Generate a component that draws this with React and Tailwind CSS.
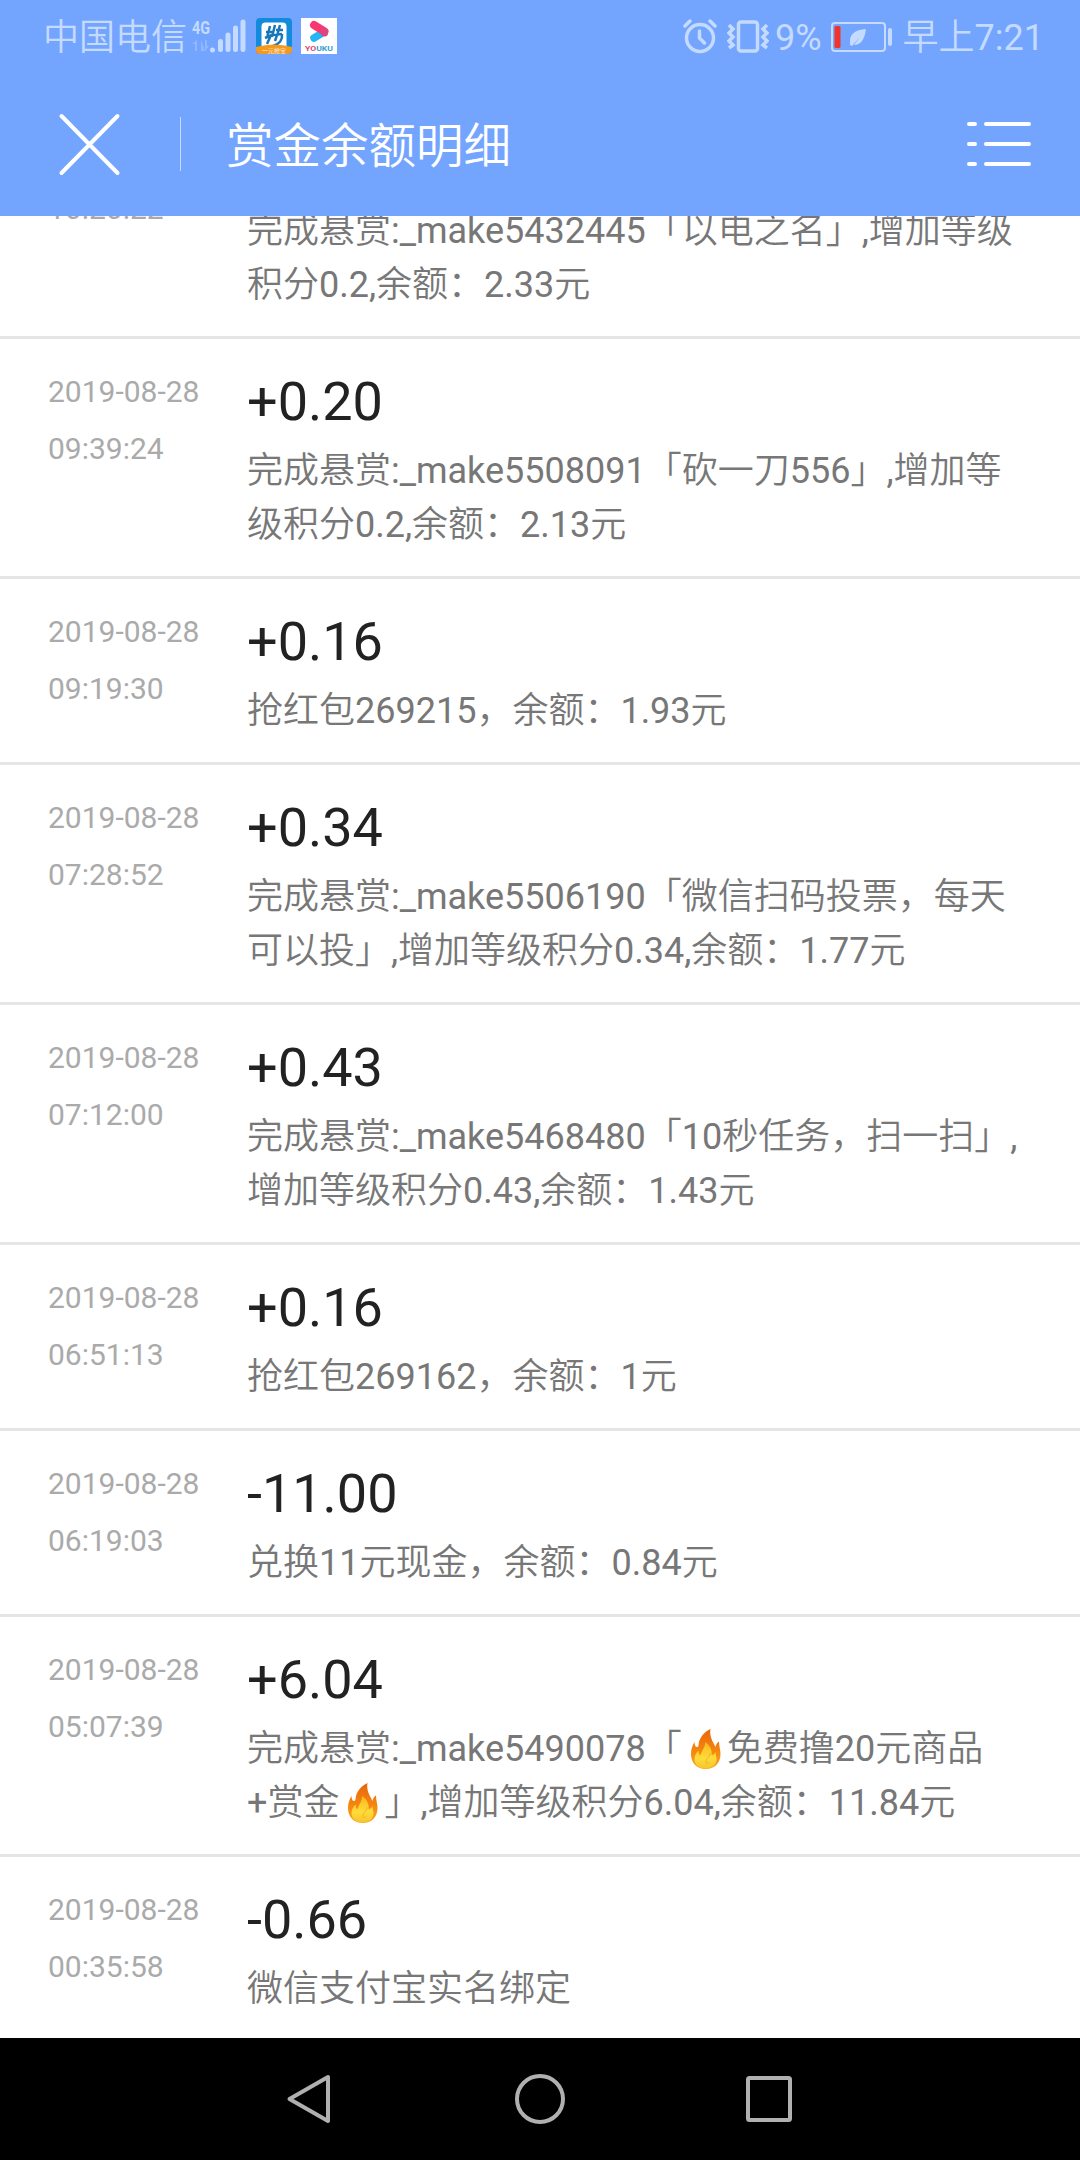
import React from 'react';

// the first entry is scrolled under the header, only its tail is on screen
const records = [
    { date: '', time: '10:20:22', amount: '', lines: ['完成悬赏:_make5432445「以电之名」,增加等级', '积分0.2,余额：2.33元'] },
    { date: '2019-08-28', time: '09:39:24', amount: '+0.20', lines: ['完成悬赏:_make5508091「砍一刀556」,增加等', '级积分0.2,余额：2.13元'] },
    { date: '2019-08-28', time: '09:19:30', amount: '+0.16', lines: ['抢红包269215，余额：1.93元'] },
    { date: '2019-08-28', time: '07:28:52', amount: '+0.34', lines: ['完成悬赏:_make5506190「微信扫码投票，每天', '可以投」,增加等级积分0.34,余额：1.77元'] },
    { date: '2019-08-28', time: '07:12:00', amount: '+0.43', lines: ['完成悬赏:_make5468480「10秒任务，扫一扫」,', '增加等级积分0.43,余额：1.43元'] },
    { date: '2019-08-28', time: '06:51:13', amount: '+0.16', lines: ['抢红包269162，余额：1元'] },
    { date: '2019-08-28', time: '06:19:03', amount: '-11.00', lines: ['兑换11元现金，余额：0.84元'] },
    { date: '2019-08-28', time: '05:07:39', amount: '+6.04', lines: ['完成悬赏:_make5490078「🔥免费撸20元商品', '+赏金🔥」,增加等级积分6.04,余额：11.84元'] },
    { date: '2019-08-28', time: '00:35:58', amount: '-0.66', lines: ['微信支付宝实名绑定'] },
];

function Flame() {
    return (
        <svg viewBox="0 0 45 44" className="inline-block h-11 w-[45px] align-[-10px]">
            <defs>
                <linearGradient id="flameOuter" x1="0" y1="0" x2="0" y2="1">
                    <stop offset="0" stopColor="#e8650a" />
                    <stop offset="0.6" stopColor="#f58a10" />
                    <stop offset="1" stopColor="#f9a825" />
                </linearGradient>
                <linearGradient id="flameInner" x1="0" y1="0" x2="0" y2="1">
                    <stop offset="0" stopColor="#fbb61c" />
                    <stop offset="0.6" stopColor="#fddc3a" />
                    <stop offset="1" stopColor="#f7c52c" />
                </linearGradient>
            </defs>
            <path d="M28.500 2C22 5 17 11 16.500 18c0 1-.5 2-1.500 2-1.500 0-2.500-2-2.500-5C10 19 9 23 9 27c0 9 6 15 14.700 15S38.500 36 38.500 27c0-4-1.500-8-1.500-12.500-2 1-3 3-3.500 5.500C31 15 27 9 28.500 2z" fill="url(#flameOuter)" />
            <path d="M23 15c.5 5-3 8-4 12-.3 1.300-1.500 1.300-2-.5l-.5-3c-3 3-4 6-4 9 0 5 4.500 9 11 9s11-4 11-9c0-3-1-5-1-8-.5 2-2 3.500-4 3.500 1-5-2-10-6.500-13z" fill="url(#flameInner)" />
            <path d="M28 26c0 5-4 5-4 9 0 2 2 2 3 0" fill="none" stroke="#f0b429" strokeWidth="1" />
        </svg>
    );
}

function Line({ text }) {
    return (
        <div className="h-[54px]">
            {text.split('🔥').map((part, i) => (
                <React.Fragment key={i}>
                    {i > 0 && <Flame />}
                    {part}
                </React.Fragment>
            ))}
        </div>
    );
}

function Record({ record }) {
    return (
        <div className="flex shrink-0 border-b-[3px] border-[#e5e5e5] pl-12 pt-6 pb-6 last:-mb-[5px]">
            <div className="w-[199px] text-[30px] leading-[57px] text-[#aaaaaa]">
                <div className="h-[57px]">{record.date}</div>
                <div>{record.time}</div>
            </div>
            <div className="whitespace-nowrap">
                <div className="h-[81px] pt-1 text-[54px] leading-[70px] text-[#222222]">{record.amount}</div>
                <div className="text-[36px] leading-[54px] text-[#777777]">
                    {record.lines.map((line) => <Line key={line} text={line} />)}
                </div>
            </div>
        </div>
    );
}

function StatusBar() {
    return (
        <div className="flex h-[72px] items-center justify-between pl-[43px] pr-9 text-[36px] leading-[54px] text-[#c5daff]">
            <div className="flex items-center">
                <span className="pt-[3px]">中国电信</span>
                <svg viewBox="0 0 56 36" className="ml-[5px] h-9 w-14" fill="currentColor">
                    <text x="0" y="16" fontSize="19" fontWeight="bold" fontFamily="Roboto" textLength="18" lengthAdjust="spacingAndGlyphs">4G</text>
                    <path d="M5 22v11h-2v-7h-3zM9 22v11h4zM13 22v11l4-5h-2v-6z" opacity="0.35" />
                    <path d="M20.500 32v0M28.500 23.500v8M36 17v14.500M43.500 10v21.500M51 4v27.500" stroke="currentColor" strokeWidth="5" strokeLinecap="round" />
                </svg>
                <svg viewBox="0 0 36 36" className="ml-2 h-9 w-9">
                    <rect width="36" height="36" rx="4" fill="#138bdc" />
                    <rect x="5.500" y="4.500" width="25" height="27" rx="4" fill="#fff" />
                    <path d="M10 14h7M14 8l-3 12M19 7l-3 12M24 7l-3 11M20 12h7M9 20l7-3 10-1M15 17l-4 9M21 17l-2 6M26 16q1 9-9 12" fill="none" stroke="#1877b8" strokeWidth="2.500" />
                    <path d="M0 29q18-5 36 0v3q0 4-4 4H4q-4 0-4-4z" fill="#f39a1e" />
                    <text x="18" y="34.500" fontSize="6" textAnchor="middle" fill="#fff">一元抢宝</text>
                </svg>
                <svg viewBox="0 0 36 36" className="ml-[9px] h-9 w-9">
                    <rect width="36" height="36" fill="#fff" />
                    <path d="M13 20l9-5.500" stroke="#23b6f5" strokeWidth="7.500" strokeLinecap="round" />
                    <path d="M13 7l10.500 6.500" stroke="#f8386e" strokeWidth="8" strokeLinecap="round" />
                    <path d="M23.500 13.500v1.500" stroke="#d9487f" strokeWidth="7" strokeLinecap="round" />
                    <text x="4" y="33" fontSize="7.500" fontWeight="bold" fontFamily="Roboto" fill="#d8486f" textLength="28" lengthAdjust="spacingAndGlyphs">YO<tspan fill="#3a9fd8">UKU</tspan></text>
                </svg>
            </div>
            <div className="flex items-center">
                <svg viewBox="0 0 34 36" className="h-9 w-[34px]" fill="none" stroke="currentColor" strokeWidth="3.500" strokeLinecap="round">
                    <circle cx="17" cy="20" r="13.500" />
                    <path d="M16.500 13v7l5 5M2 8l5-5M32 8l-5-5" />
                </svg>
                <svg viewBox="0 0 42 36" className="ml-2.5 h-9 w-[42px]" fill="none" stroke="currentColor" strokeWidth="3.500">
                    <rect x="11.500" y="4" width="19" height="29" rx="2.500" />
                    <path d="M2 7l4 4-4 4 4 4-4 4 4 4-4 3M40 7l-4 4 4 4-4 4 4 4-4 4 4 3" />
                </svg>
                <span className="ml-1.5 pt-[3px]">9%</span>
                <svg viewBox="0 0 62 30" className="ml-[9px] mt-0.5 h-[30px] w-[62px]">
                    <rect x="1" y="1" width="53" height="28" rx="3" fill="none" stroke="currentColor" strokeWidth="2" />
                    <rect x="3.500" y="4" width="6" height="22" rx="1.500" fill="#f0342c" />
                    <path d="M35 7q-15 1-16 11v5l2 1 8-9-6 8q10 0 12-16z" fill="currentColor" />
                    <rect x="57" y="6" width="4" height="18" rx="2" fill="currentColor" />
                </svg>
                <span className="ml-2.5 pt-[3px]">早上7:21</span>
            </div>
        </div>
    );
}

function TitleBar() {
    return (
        <div className="flex h-36 items-center pl-[58px] pr-[49px] text-white">
            <svg viewBox="0 0 64 64" className="h-16 w-16" stroke="currentColor" strokeWidth="4" strokeLinecap="round">
                <path d="M3.500 4l56 57M59.500 4l-56 57" />
            </svg>
            <div className="ml-[58px] h-[54px] w-px bg-white/60" />
            <h1 className="ml-[45px] flex-1 pt-[5px] text-[47.5px] leading-[72px]">赏金余额明细</h1>
            <svg viewBox="0 0 64 46" className="h-[46px] w-16" stroke="currentColor" strokeWidth="4" strokeLinecap="round">
                <path d="M2 3h6M19 3h43M2 23h6M19 23h43M2 43h6M19 43h43" />
            </svg>
        </div>
    );
}

function NavBar() {
    return (
        <div className="z-10 flex h-[122px] items-center justify-center gap-[180px] bg-black text-[#b0b0b0]">
            <svg viewBox="0 0 50 50" className="h-[50px] w-[50px]" fill="none" stroke="currentColor" strokeWidth="4" strokeLinejoin="round">
                <path d="M43 3v44L4.500 25z" />
            </svg>
            <svg viewBox="0 0 50 50" className="h-[50px] w-[50px]" fill="none" stroke="currentColor" strokeWidth="4">
                <circle cx="25" cy="25" r="23" />
            </svg>
            <svg viewBox="0 0 50 50" className="h-[50px] w-[50px]" fill="none" stroke="currentColor" strokeWidth="4">
                <rect x="3" y="4" width="42" height="42" rx="1.500" />
            </svg>
        </div>
    );
}

export default function App() {
    return (
        <div className="flex h-[2160px] w-[1080px] flex-col overflow-hidden bg-white font-['Roboto','Noto_Sans_CJK_SC_DemiLight','Noto_Sans_CJK_SC',sans-serif]">
            <header className="bg-[#73a5ff]">
                <StatusBar />
                <TitleBar />
            </header>
            {/* List is scrolled, so it is anchored to the bottom */}
            <main className="flex flex-1 flex-col justify-end overflow-hidden">
                {records.map((r) => <Record key={r.time} record={r} />)}
            </main>
            <NavBar />
        </div>
    );
}
